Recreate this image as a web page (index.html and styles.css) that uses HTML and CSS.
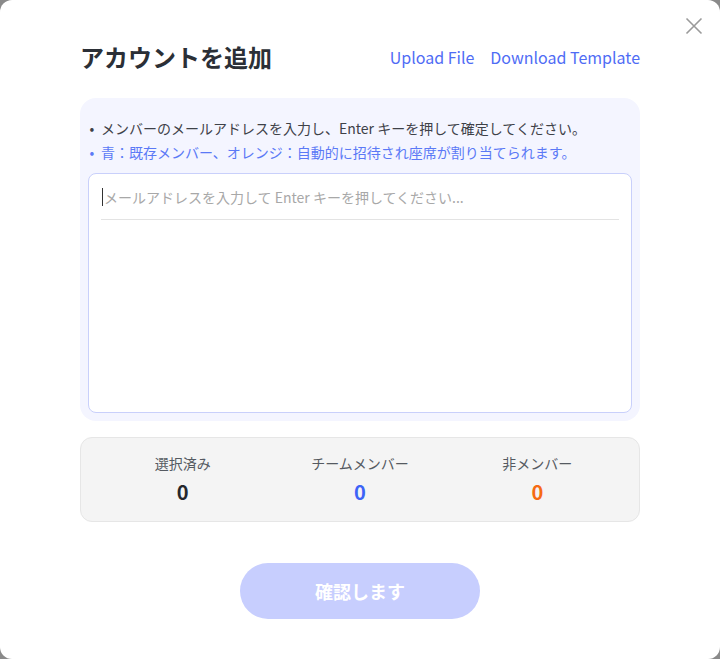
FILE: index.html
```html
<!DOCTYPE html>
<html lang="ja">
<head>
<meta charset="utf-8">
<link rel="stylesheet" href="styles.css">
</head>
<body>
<div class="dialog">
  <button class="close" aria-label="close">
    <svg width="18" height="18" viewBox="0 0 18 18"><path d="M1.5 1.5 L16.5 16.5 M16.5 1.5 L1.5 16.5" stroke="#9a9a9a" stroke-width="1.6" fill="none"/></svg>
  </button>
  <div class="header">
    <h1 class="title">アカウントを追加</h1>
    <div class="links">
      <a class="link">Upload File</a>
      <a class="link">Download Template</a>
    </div>
  </div>
  <div class="panel">
    <ul class="tips">
      <li class="tip">メンバーのメールアドレスを入力し、Enter キーを押して確定してください。</li>
      <li class="tip tip-blue">青：既存メンバー、オレンジ：自動的に招待され座席が割り当てられます。</li>
    </ul>
    <div class="box">
      <div class="input-row"><span class="caret"></span><span class="placeholder">メールアドレスを入力して Enter キーを押してください...</span></div>
    </div>
  </div>
  <div class="stats">
    <div class="stat"><div class="stat-label">選択済み</div><div class="stat-num">0</div></div>
    <div class="stat"><div class="stat-label">チームメンバー</div><div class="stat-num num-blue">0</div></div>
    <div class="stat"><div class="stat-label">非メンバー</div><div class="stat-num num-orange">0</div></div>
  </div>
  <div class="actions">
    <button class="confirm">確認します</button>
  </div>
</div>
</body>
</html>
```
FILE: styles.css
```css
html, body {
  margin: 0;
  padding: 0;
  background: #8a8a8a;
}
body {
  font-family: "Noto Sans CJK JP", "Noto Sans", sans-serif;
  width: 720px;
  height: 659px;
  overflow: hidden;
}
.dialog {
  position: relative;
  width: 720px;
  height: 659px;
  box-sizing: border-box;
  background: #fff;
  border-radius: 12px;
  padding: 39px 80px 0 80px;
}
.close {
  position: absolute;
  top: 17px;
  right: 17px;
  width: 18px;
  height: 18px;
  padding: 0;
  border: none;
  background: none;
  display: flex;
}
.header {
  display: flex;
  justify-content: space-between;
  align-items: center;
  height: 36px;
}
.title {
  margin: 0;
  font-size: 24px;
  font-weight: 700;
  color: #2b2f36;
  line-height: 36px;
}
.links {
  display: flex;
  gap: 16px;
}
.link {
  font-size: 16px;
  color: #4f6cf5;
  line-height: 24px;
}
.panel {
  margin-top: 23px;
  background: #f4f5ff;
  border-radius: 16px;
  padding: 18px 8px 8px 8px;
}
.tips {
  margin: 0;
  padding: 0;
  list-style: none;
}
.tip {
  font-size: 14px;
  line-height: 24px;
  color: #3e4148;
}
.tip::before {
  content: "•";
  display: inline-block;
  width: 8px;
  text-align: center;
  margin-right: 5px;
}
.tip-blue {
  color: #5b79f6;
}
.box {
  margin-top: 9px;
  height: 240px;
  box-sizing: border-box;
  background: #fff;
  border: 1px solid #c9d0fb;
  border-radius: 8px;
  padding: 12px 12px;
}
.input-row {
  display: flex;
  align-items: center;
  height: 34px;
  box-sizing: border-box;
  padding-bottom: 12px;
  border-bottom: 1px solid #e3e3e3;
  padding-left: 1px;
}
.caret {
  width: 1px;
  height: 18px;
  background: #333;
  margin-right: 1px;
}
.placeholder {
  font-size: 14px;
  line-height: 22px;
  color: #a8a8a8;
}
.stats {
  margin-top: 16px;
  display: flex;
  background: #f4f4f4;
  border: 1px solid #e6e6e6;
  border-radius: 12px;
  padding: 15px 13px 15px 13px;
}
.stat {
  flex: 1;
  display: flex;
  flex-direction: column;
  align-items: center;
}
.stat-label {
  font-size: 14px;
  line-height: 20px;
  color: #555a61;
}
.stat-num {
  margin-top: 5px;
  font-size: 20px;
  font-weight: 700;
  line-height: 28px;
  color: #24272c;
}
.num-blue { color: #3d63f7; }
.num-orange { color: #f66a12; }
.actions {
  margin-top: 41px;
  display: flex;
  justify-content: center;
}
.confirm {
  width: 240px;
  height: 56px;
  border: none;
  border-radius: 28px;
  background: #c7cefe;
  color: #fff;
  font-family: "Noto Sans CJK JP", "Noto Sans", sans-serif;
  font-size: 18px;
  font-weight: 700;
}
```
